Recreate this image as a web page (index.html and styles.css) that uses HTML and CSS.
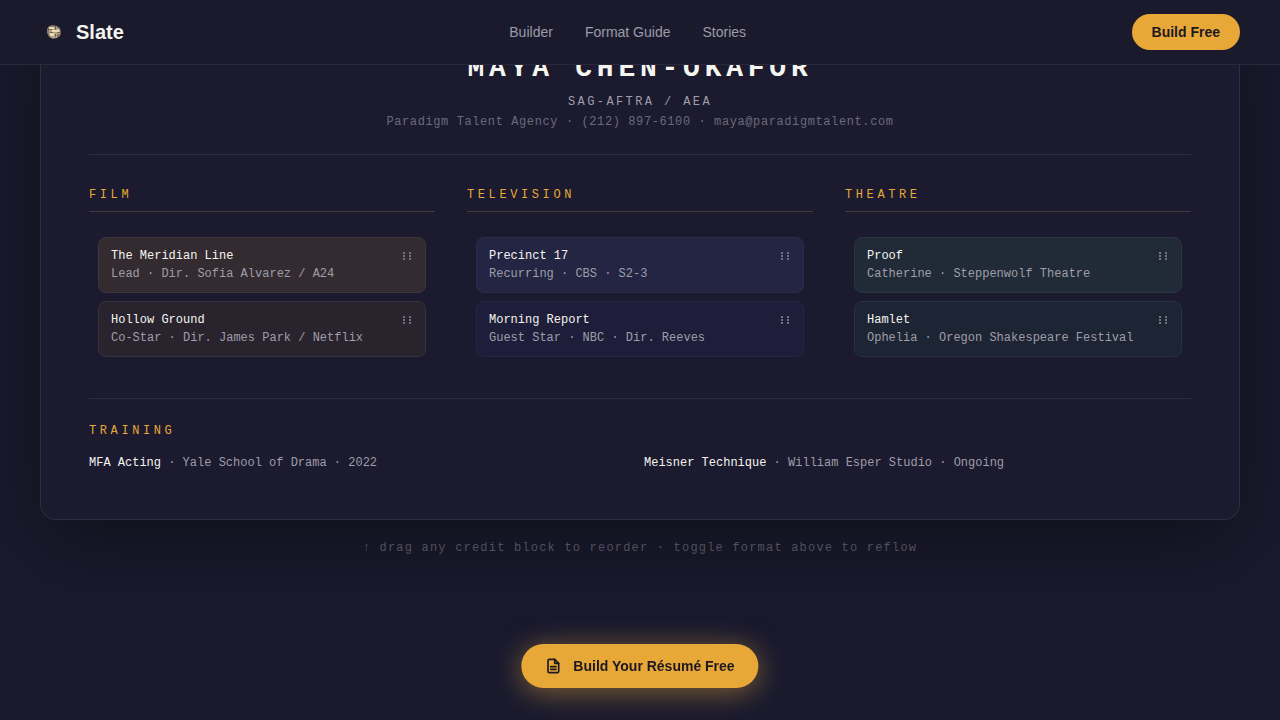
FILE: index.html
```html
<!DOCTYPE html>
<html lang="en">
<head>
    <meta charset="UTF-8">
    <meta name="viewport" content="width=device-width, initial-scale=1.0">
    <title>Slate</title>
    <link rel="stylesheet" href="styles.css">
</head>
<body>
    <!-- Drag handle icon, shared by every credit -->
    <svg class="sprite" aria-hidden="true">
        <symbol id="grip" viewBox="0 0 12 12">
            <path d="M2 2h2v2H2zM2 5h2v2H2zM2 8h2v2H2zM8 2h2v2H8zM8 5h2v2H8zM8 8h2v2H8z"/>
        </symbol>
    </svg>

    <header class="navbar">
        <a href="#" class="brand">
            <svg class="brand-logo" viewBox="0 0 28 28" aria-hidden="true">
                <path fill="#85796a" d="M9 8l4-1 4 1 3 2 1 4-1 4-3 2-4 1-4-2-2-4V11z"/>
                <path fill="#b8a583" d="M9 9h8v3h3v4h-3v4h-5l-3-3z"/>
                <path fill="#ead9b8" d="M9 9h5v2H9zM12 12h5v2h-5zM10 15h4v3h-4zM17 11h2v3h-2z"/>
                <path fill="none" stroke="#4f463c" stroke-width=".7" d="M8 11.500h4M15.500 8v4M17 14.500h3M10 14.500h3M15.500 16v3"/>
            </svg>
            <span>Slate</span>
        </a>
        <nav class="nav-links">
            <a href="#builder">Builder</a>
            <a href="#guide">Format Guide</a>
            <a href="#stories">Stories</a>
        </nav>
        <button type="button" class="nav-btn">Build Free</button>
    </header>

    <main id="builder">
        <article class="resume">
            <div class="resume-head">
                <h1>MAYA CHEN-OKAFOR</h1>
                <p class="union">SAG-AFTRA / AEA</p>
                <p class="contact">Paradigm Talent Agency · (212) 897-6100 · maya@paradigmtalent.com</p>
            </div>

            <div class="credits">
                <section>
                    <h2>FILM</h2>
                    <ul class="credit-list">
                        <li class="credit film lead">
                            <div><h3>The Meridian Line</h3><p>Lead · Dir. Sofia Alvarez / A24</p></div>
                            <svg class="handle"><use href="#grip"/></svg>
                        </li>
                        <li class="credit film">
                            <div><h3>Hollow Ground</h3><p>Co-Star · Dir. James Park / Netflix</p></div>
                            <svg class="handle"><use href="#grip"/></svg>
                        </li>
                    </ul>
                </section>
                <section>
                    <h2>TELEVISION</h2>
                    <ul class="credit-list">
                        <li class="credit tv lead">
                            <div><h3>Precinct 17</h3><p>Recurring · CBS · S2-3</p></div>
                            <svg class="handle"><use href="#grip"/></svg>
                        </li>
                        <li class="credit tv">
                            <div><h3>Morning Report</h3><p>Guest Star · NBC · Dir. Reeves</p></div>
                            <svg class="handle"><use href="#grip"/></svg>
                        </li>
                    </ul>
                </section>
                <section>
                    <h2>THEATRE</h2>
                    <ul class="credit-list">
                        <li class="credit theatre lead">
                            <div><h3>Proof</h3><p>Catherine · Steppenwolf Theatre</p></div>
                            <svg class="handle"><use href="#grip"/></svg>
                        </li>
                        <li class="credit theatre">
                            <div><h3>Hamlet</h3><p>Ophelia · Oregon Shakespeare Festival</p></div>
                            <svg class="handle"><use href="#grip"/></svg>
                        </li>
                    </ul>
                </section>
            </div>

            <section class="training">
                <h2>TRAINING</h2>
                <div class="training-grid">
                    <p><strong>MFA Acting</strong> · Yale School of Drama · 2022</p>
                    <p><strong>Meisner Technique</strong> · William Esper Studio · Ongoing</p>
                </div>
            </section>
        </article>
        <p class="hint">↑ drag any credit block to reorder · toggle format above to reflow</p>
    </main>

    <!-- Floating call to action -->
    <button type="button" class="cta">
        <svg viewBox="0 0 24 24" aria-hidden="true">
            <path d="M14 2H6a2 2 0 0 0-2 2v16a2 2 0 0 0 2 2h12a2 2 0 0 0 2-2V8z"/>
            <path d="M14 2v6h6M8 13h8M8 17h8"/>
        </svg>
        Build Your Résumé Free
    </button>
</body>
</html>
```

FILE: styles.css
```css
* {
    margin: 0;
    padding: 0;
    box-sizing: border-box;
}
body {
    background: #1a1a2e;
    color: #f5f5f0;
    font-family: "Liberation Sans", Arial, sans-serif;
    min-height: 100vh;
    overflow-x: hidden;
}
a {
    color: inherit;
    text-decoration: none;
}
button {
    border: none;
    border-radius: 999px;
    background: #e8a838;
    color: #1d1820;
    font-family: inherit;
    font-size: 14px;
    font-weight: bold;
    cursor: pointer;
}
.sprite {
    display: none;
}

/* Navigation */
.navbar {
    position: fixed;
    top: 0;
    left: 0;
    right: 0;
    z-index: 10;
    height: 65px;
    padding: 0 40px;
    display: flex;
    align-items: center;
    justify-content: space-between;
    background: #1b1a2d;
    border-bottom: 1px solid #2a293b;
}
.brand {
    display: flex;
    align-items: center;
    gap: 8px;
    font-size: 20px;
    font-weight: bold;
}
.brand-logo {
    width: 28px;
    height: 28px;
}
.nav-links {
    display: flex;
    gap: 32px;
    font-size: 14px;
    color: #9c9ba8;
}
.nav-btn {
    height: 36px;
    padding: 0 20px;
}

/* Resume sheet */
main {
    padding: 0 40px;
    font-family: "Liberation Mono", "Courier New", monospace;
    font-size: 12px;
    line-height: 18px;
}
.resume {
    padding: 50px 48px 46px;
    background: #1b1a2e;
    border: 1px solid #2f2e40;
    border-top: none;
    border-radius: 0 0 16px 16px;
    box-shadow: 0 24px 80px rgba(0, 0, 0, 0.4);
}
.resume-head {
    text-align: center;
    line-height: 20px;
    padding-bottom: 22px;
    border-bottom: 1px solid #2f2e40;
}
h1 {
    font-size: 28px;
    line-height: 38px;
    letter-spacing: 0.17em;
    margin-bottom: 4px;
}
.union {
    color: #a09fab;
    letter-spacing: 0.2em;
}
.contact {
    color: #6b6a79;
    letter-spacing: 0.05em;
}
h2 {
    color: #e8a838;
    font-size: 12px;
    font-weight: normal;
    line-height: 16px;
    letter-spacing: 0.3em;
}
.credits {
    display: grid;
    grid-template-columns: repeat(3, 1fr);
    gap: 32px;
    margin: 32px 0;
}
.credits h2 {
    padding-bottom: 8px;
    border-bottom: 1px solid #443a3a;
}
.credit-list {
    list-style: none;
    display: flex;
    flex-direction: column;
    gap: 8px;
    margin-top: 16px;
    padding: 9px;
}
.credit {
    display: flex;
    justify-content: space-between;
    padding: 9px 12px;
    border: 1px solid #35323c;
    border-radius: 8px;
    color: #9f9da8;
    cursor: grab;
}
.credit h3 {
    color: #f5f5f0;
    font-size: 12px;
    font-weight: normal;
}
.film {
    background: #28232d;
}
.film.lead {
    background: #342b30;
    border-color: #40373a;
}
.tv {
    background: #1e1e3a;
    border-color: #272744;
}
.tv.lead {
    background: #232542;
    border-color: #2b2d4b;
}
.theatre {
    background: #1d2433;
    border-color: #293140;
}
.theatre.lead {
    background: #202b37;
    border-color: #293640;
}
.handle {
    width: 12px;
    height: 12px;
    margin-top: 3px;
    fill: #73717d;
}
.training {
    padding-top: 24px;
    border-top: 1px solid #2f2e40;
}
.training-grid {
    display: grid;
    grid-template-columns: 1fr 1fr;
    gap: 8px;
    margin-top: 14px;
    line-height: 20px;
    color: #9f9da8;
}
.training strong {
    color: #f5f5f0;
    font-weight: normal;
}
.hint {
    margin-top: 16px;
    line-height: 24px;
    text-align: center;
    letter-spacing: 0.1em;
    color: #51505c;
    position: relative;
}

.cta {
    position: fixed;
    bottom: 32px;
    left: 50%;
    transform: translateX(-50%);
    height: 44px;
    padding: 0 24px;
    display: flex;
    align-items: center;
    gap: 12px;
    white-space: nowrap;
    box-shadow: 0 4px 28px rgba(232, 168, 56, 0.5);
}
.cta svg {
    width: 16px;
    height: 16px;
    fill: none;
    stroke: currentColor;
    stroke-width: 2.5;
    stroke-linecap: round;
    stroke-linejoin: round;
}
```
